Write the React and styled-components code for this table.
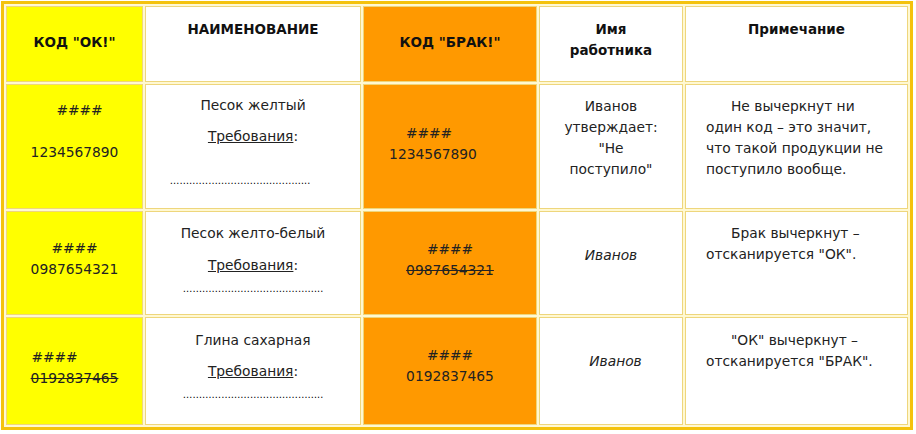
import React from "react";
import styled, { createGlobalStyle } from "styled-components";

const Global = createGlobalStyle`
  html, body { margin: 0; padding: 0; background: #ffffff; }
  body { font-family: "DejaVu Sans", Verdana, sans-serif; color: #222; }
`;

const Page = styled.div`
  padding: 1px;
`;

const Grid = styled.div`
  display: grid;
  grid-template-columns: 137px 216px 174px 144px 223px;
  grid-template-rows: 76px 125px 104px 108px;
  gap: 2px;
  padding: 2px;
  width: max-content;
  border: 3px solid #f4c20d;
  background: #fff8d2;
`;

const bgs = { ok: "#ffff00", brak: "#ff9900", plain: "#ffffff" };

const Cell = styled.div`
  box-sizing: border-box;
  border: 1px solid #eed67c;
  background: ${(p) => bgs[p.$bg || "plain"]};
  padding-top: ${(p) => p.$pt || 0}px;
  padding-left: ${(p) => p.$pl || 0}px;
  padding-right: ${(p) => p.$pr || 0}px;
  text-align: ${(p) => p.$align || "center"};
  font-size: 13.8px;
  line-height: 21px;
`;

const Head = styled(Cell)`
  font-weight: bold;
  font-size: 13.5px;
  color: #111;
`;

const Line = styled.div`
  white-space: nowrap;
  margin-top: ${(p) => p.$gap || 0}px;
  padding-left: ${(p) => p.$sl || 0}px;
  padding-right: ${(p) => p.$sr || 0}px;
  text-indent: ${(p) => p.$indent || 0}px;
  font-style: ${(p) => (p.$italic ? "italic" : "normal")};
  text-decoration: ${(p) => (p.$strike ? "line-through" : "none")};
`;

const Req = styled.span`
  text-decoration: underline;
`;

const Dots = styled(Line)`
  font-size: 9.6px;
  color: #000;
  position: relative;
  top: 2px;
`;

const dots = "…".repeat(14) + "..";

function NameCell({ title, pt, reqGap, dotsGap, dotsShift }) {
  return (
    <Cell $pt={pt}>
      <Line>{title}</Line>
      <Line $gap={reqGap}>
        <Req>Требования</Req>:
      </Line>
      <Dots $gap={dotsGap} $sr={dotsShift}>
        {dots}
      </Dots>
    </Cell>
  );
}

export default function App() {
  return (
    <>
      <Global />
      <Page>
        <Grid>
          <Head $bg="ok" $pt={25}>
            <Line>КОД "ОК!"</Line>
          </Head>
          <Head $pt={12}>
            <Line>НАИМЕНОВАНИЕ</Line>
          </Head>
          <Head $bg="brak" $pt={25}>
            <Line>КОД "БРАК!"</Line>
          </Head>
          <Head $pt={12}>
            <Line>Имя</Line>
            <Line>работника</Line>
          </Head>
          <Head $pt={12}>
            <Line>Примечание</Line>
          </Head>

          <Cell $bg="ok" $pt={15}>
            <Line $sl={10}>####</Line>
            <Line $gap={21}>1234567890</Line>
          </Cell>
          <NameCell title="Песок желтый" pt={10} reqGap={10} dotsGap={21} dotsShift={26} />
          <Cell $bg="brak" $pt={38} $pr={34}>
            <Line $sr={8}>####</Line>
            <Line>1234567890</Line>
          </Cell>
          <Cell $pt={11}>
            <Line>Иванов</Line>
            <Line>утверждает:</Line>
            <Line>"Не</Line>
            <Line>поступило"</Line>
          </Cell>
          <Cell $pt={11} $pl={20} $align="left">
            <Line $indent={25}>Не вычеркнут ни</Line>
            <Line>один код – это значит,</Line>
            <Line>что такой продукции не</Line>
            <Line>поступило вообще.</Line>
          </Cell>

          <Cell $bg="ok" $pt={26}>
            <Line>####</Line>
            <Line>0987654321</Line>
          </Cell>
          <NameCell title="Песок желто-белый" pt={11} reqGap={11} dotsGap={0} dotsShift={0} />
          <Cell $bg="brak" $pt={27}>
            <Line>####</Line>
            <Line $strike>0987654321</Line>
          </Cell>
          <Cell $pt={33}>
            <Line $italic>Иванов</Line>
          </Cell>
          <Cell $pt={11} $pl={20} $align="left">
            <Line $indent={25}>Брак вычеркнут –</Line>
            <Line>отсканируется "ОК".</Line>
          </Cell>

          <Cell $bg="ok" $pt={29}>
            <Line $sr={40}>####</Line>
            <Line $strike>0192837465</Line>
          </Cell>
          <NameCell title="Глина сахарная" pt={12} reqGap={10} dotsGap={0} dotsShift={0} />
          <Cell $bg="brak" $pt={27}>
            <Line>####</Line>
            <Line>0192837465</Line>
          </Cell>
          <Cell $pt={33} $pl={9}>
            <Line $italic>Иванов</Line>
          </Cell>
          <Cell $pt={12} $pl={20} $align="left">
            <Line $indent={25}>"ОК" вычеркнут –</Line>
            <Line>отсканируется "БРАК".</Line>
          </Cell>
        </Grid>
      </Page>
    </>
  );
}
